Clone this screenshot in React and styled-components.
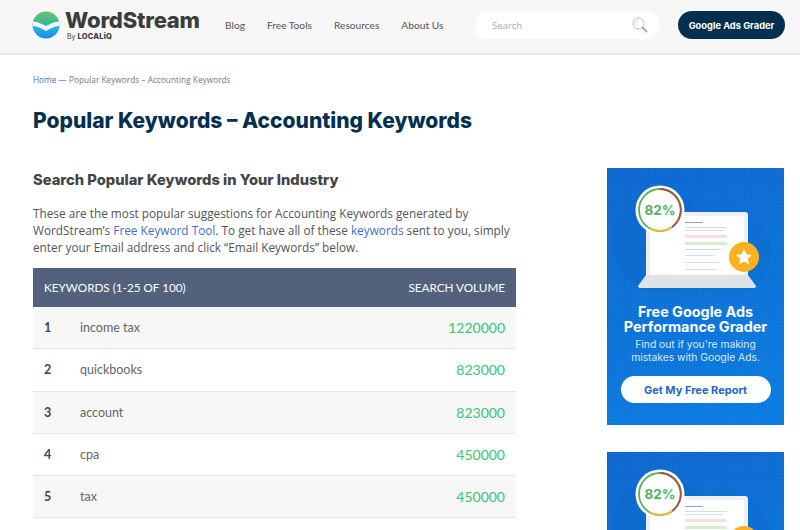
import React from 'react';
import styled, { createGlobalStyle } from 'styled-components';

const GlobalStyle = createGlobalStyle`
  html, body { margin: 0; padding: 0; background: #fff; overflow: hidden; }
  body { font-family: "Open Sans", sans-serif; color: #555; }
  * { box-sizing: border-box; }
`;

const rows = [
  ['1', 'income tax', '1220000'],
  ['2', 'quickbooks', '823000'],
  ['3', 'account', '823000'],
  ['4', 'cpa', '450000'],
  ['5', 'tax', '450000'],
];

const Page = styled.div`
  width: 800px;
  height: 530px;
  overflow: hidden;
`;

const Header = styled.header`
  height: 55px;
  background: #f7f7f7;
  border-bottom: 2px solid #e8e8e8;
  display: flex;
  align-items: center;
  padding: 0 15px 3px 32px;
`;

const Logo = styled.div`
  display: flex;
  align-items: center;
  gap: 5px;
  width: 191px;
`;

const LogoText = styled.div`
  display: flex;
  flex-direction: column;
  color: #3c3c3c;
  font-family: Inter, sans-serif;
`;

const LogoName = styled.span`
  font-size: 22px;
  font-weight: 800;
  line-height: 23px;
  letter-spacing: -0.2px;
`;

const LogoBy = styled.span`
  font-size: 7px;
  line-height: 9px;
  padding-left: 2px;
  b { font-size: 7.5px; font-weight: 800; letter-spacing: 0.2px; }
`;

const Nav = styled.nav`
  display: flex;
  gap: 22px;
  margin-left: 2px;
  width: 250px;
  flex: none;
`;

const NavLink = styled.a`
  font-family: Lato, sans-serif;
  font-size: 10.2px;
  color: #555;
  white-space: nowrap;
`;

const Search = styled.div`
  width: 185px;
  height: 28px;
  background: #fff;
  border-radius: 14px;
  display: flex;
  align-items: center;
  justify-content: space-between;
  padding: 0 12px 0 17px;
  font-size: 9.5px;
  color: #aaa;
`;

const GraderButton = styled.a`
  margin-left: 18px;
  width: 107px;
  height: 28px;
  border-radius: 14px;
  background: #03304f;
  color: #fff;
  display: flex;
  align-items: center;
  justify-content: center;
  font-family: Inter, sans-serif;
  font-size: 9.3px;
  font-weight: 700;
`;

const Main = styled.main`
  padding: 0 16px 0 33px;
`;

const Crumbs = styled.div`
  padding-top: 19px;
  font-size: 8.3px;
  line-height: 12px;
  color: #777;
`;

const BlueLink = styled.a`
  color: #3f6fc9;
`;

const Title = styled.h1`
  margin: 22px 0 0;
  font-family: Inter, sans-serif;
  font-size: 21px;
  line-height: 26px;
  font-weight: 800;
  color: #03304f;
`;

const Columns = styled.div`
  display: grid;
  grid-template-columns: 483px 177px;
  column-gap: 91px;
`;

const Content = styled.section`
  padding-top: 36px;
`;

const Subtitle = styled.h2`
  margin: 0;
  font-family: Inter, sans-serif;
  font-size: 14.7px;
  line-height: 20px;
  font-weight: 800;
  color: #444;
`;

const Intro = styled.p`
  margin: 15px 0 0;
  font-size: 11.8px;
  line-height: 17px;
  color: #555;
`;

const Table = styled.div`
  margin-top: 12px;
`;

const TableHead = styled.div`
  height: 39px;
  background: #53627c;
  color: #fff;
  display: flex;
  justify-content: space-between;
  align-items: center;
  padding: 0 11px 2px;
  font-family: Lato, sans-serif;
  font-size: 11.7px;
`;

const Row = styled.div`
  height: 42.3px;
  display: flex;
  align-items: center;
  padding: 0 11px;
  background: ${p => (p.$odd ? '#f7f7f7' : '#fff')};
  border-bottom: 1px solid #e6e6e6;
  font-family: Lato, sans-serif;
`;

const RowNum = styled.span`
  width: 36px;
  font-size: 12.5px;
  font-weight: 700;
  color: #444;
`;

const RowWord = styled.span`
  font-size: 12.5px;
  color: #666;
`;

const RowVolume = styled.span`
  margin-left: auto;
  font-size: 14px;
  color: #3cc473;
`;

const Sidebar = styled.aside`
  padding-top: 34px;
  display: flex;
  flex-direction: column;
  gap: 27px;
`;

const Banner = styled.div`
  width: 177px;
  height: 257px;
  flex: none;
  background:
    radial-gradient(rgba(255, 255, 255, 0.07) 0.6px, transparent 0.8px) 0 0 / 3px 3px,
    linear-gradient(160deg, #0f68cf, #0a7de2);
  display: flex;
  flex-direction: column;
  align-items: center;
  color: #fff;
  font-family: Inter, sans-serif;
`;

const BannerArt = styled.svg`
  width: 177px;
  height: 136px;
  flex: none;
  display: block;
`;

const BannerTitle = styled.div`
  font-size: 14.4px;
  line-height: 15px;
  font-weight: 700;
  text-align: center;
  white-space: nowrap;
`;

const BannerText = styled.div`
  margin-top: 4px;
  font-size: 10.3px;
  line-height: 13px;
  text-align: center;
  color: #dbe9fa;
  white-space: nowrap;
`;

const BannerButton = styled.div`
  margin-top: 12px;
  width: 150px;
  height: 27px;
  border-radius: 14px;
  background: #fff;
  color: #2467c8;
  display: flex;
  align-items: center;
  justify-content: center;
  font-size: 11px;
  font-weight: 700;
`;

const MagnifierIcon = () => (
  <svg width="16" height="16" viewBox="0 0 16 16" fill="none">
    <circle cx="6.5" cy="6.5" r="5.5" stroke="#bdbdbd" strokeWidth="1" />
    <path d="M3.5 6a3 3 0 0 1 2.5-2.6" stroke="#d8d8d8" strokeWidth="1" />
    <path d="M10.6 10.6 L14.5 14.5" stroke="#a9a9a9" strokeWidth="2" strokeLinecap="round" />
  </svg>
);

const LogoMark = () => (
  <svg width="28" height="28" viewBox="0 0 28 28">
    <defs>
      <linearGradient id="logoTop" x1="0" y1="0" x2="0" y2="1">
        <stop offset="0" stopColor="#6cc16a" />
        <stop offset="1" stopColor="#34b79c" />
      </linearGradient>
      <linearGradient id="logoBottom" x1="0" y1="0" x2="0" y2="1">
        <stop offset="0" stopColor="#25c0e6" />
        <stop offset="1" stopColor="#1a86ee" />
      </linearGradient>
      <clipPath id="logoClip"><circle cx="14" cy="14" r="13.5" /></clipPath>
    </defs>
    <g clipPath="url(#logoClip)">
      <rect width="28" height="14" fill="url(#logoTop)" />
      <rect y="13" width="28" height="15" fill="url(#logoBottom)" />
      <path d="M0 10.5 C5 10 9 12.5 14 15 C19 12.5 23 10 28 10.5 L28 15 C23 15 19 17 14 20 C9 17 5 15 0 15 Z" fill="#f7f7f7" />
    </g>
  </svg>
);

const BannerDrawing = () => (
  <BannerArt viewBox="0 0 177 136">
    <circle cx="55" cy="75" r="50" fill="#0c62c4" opacity="0.3" />
    <circle cx="120" cy="85" r="44" fill="#0c62c4" opacity="0.2" />
    <rect x="39" y="44" width="102" height="66" rx="3" fill="#eef0f3" />
    <rect x="43" y="48" width="94" height="60" fill="#fff" />
    <path d="M31 118 L39 107 L141 107 L149 118 Q149 120 146 120 L34 120 Q31 120 31 118 Z" fill="#dfe3e8" />
    <rect x="78" y="54" width="18" height="1" fill="#9aa2ad" />
    <rect x="78" y="59" width="42" height="0.7" fill="#c9ced5" />
    <rect x="78" y="62" width="38" height="0.7" fill="#c9ced5" />
    <rect x="78" y="67" width="42" height="3" fill="#f9dfdb" />
    <rect x="78" y="74" width="42" height="3" fill="#d5edd0" />
    <rect x="78" y="81" width="36" height="0.7" fill="#b9bfc7" />
    <rect x="78" y="87" width="30" height="0.7" fill="#c9ced5" />
    <rect x="78" y="94" width="34" height="0.7" fill="#c9ced5" />
    <rect x="78" y="101" width="32" height="0.7" fill="#c9ced5" />
    <circle cx="53" cy="42" r="24.5" fill="#fff" />
    <circle cx="53" cy="42" r="21" fill="none" stroke="#52b365" strokeWidth="1.8" />
    <path d="M53 21 A21 21 0 0 1 65 59" fill="none" stroke="#a5553a" strokeWidth="1.8" />
    <path d="M65 59 A21 21 0 0 1 43 60.5" fill="none" stroke="#f5b82e" strokeWidth="1.8" />
    <text x="53" y="47" textAnchor="middle" fontFamily="Inter, sans-serif" fontWeight="700" fontSize="13.5" fill="#52b365">82%</text>
    <circle cx="137" cy="89" r="15" fill="#fbb022" />
    <path d="M137 81 L139.4 86.3 L145 87 L140.8 90.8 L142 96.5 L137 93.6 L132 96.5 L133.2 90.8 L129 87 L134.6 86.3 Z" fill="#fff" />
  </BannerArt>
);

// the second banner runs off the bottom of the window, only its drawing shows
const AdBanner = ({ cropped }) => (
  <Banner>
    <BannerDrawing />
    {!cropped && (
      <>
        <BannerTitle>Free Google Ads<br />Performance Grader</BannerTitle>
        <BannerText>Find out if you're making<br />mistakes with Google Ads.</BannerText>
        <BannerButton>Get My Free Report</BannerButton>
      </>
    )}
  </Banner>
);

const App = () => (
  <Page>
    <GlobalStyle />
    <Header>
      <Logo>
        <LogoMark />
        <LogoText>
          <LogoName>WordStream</LogoName>
          <LogoBy>By <b>LOCALiQ</b></LogoBy>
        </LogoText>
      </Logo>
      <Nav>
        <NavLink>Blog</NavLink>
        <NavLink>Free Tools</NavLink>
        <NavLink>Resources</NavLink>
        <NavLink>About Us</NavLink>
      </Nav>
      <Search>
        Search
        <MagnifierIcon />
      </Search>
      <GraderButton>Google Ads Grader</GraderButton>
    </Header>
    <Main>
      <Crumbs><BlueLink>Home</BlueLink> — Popular Keywords – Accounting Keywords</Crumbs>
      <Title>Popular Keywords – Accounting Keywords</Title>
      <Columns>
        <Content>
          <Subtitle>Search Popular Keywords in Your Industry</Subtitle>
          <Intro>
            These are the most popular suggestions for Accounting Keywords generated by WordStream’s{' '}
            <BlueLink>Free Keyword Tool</BlueLink>. To get have all of these <BlueLink>keywords</BlueLink> sent to you, simply
            enter your Email address and click “Email Keywords” below.
          </Intro>
          <Table>
            <TableHead>
              <span>KEYWORDS (1-25 OF 100)</span>
              <span>SEARCH VOLUME</span>
            </TableHead>
            {rows.map((r, i) => (
              <Row key={r[0]} $odd={i % 2 === 0}>
                <RowNum>{r[0]}</RowNum>
                <RowWord>{r[1]}</RowWord>
                <RowVolume>{r[2]}</RowVolume>
              </Row>
            ))}
          </Table>
        </Content>
        <Sidebar>
          <AdBanner />
          <AdBanner cropped />
        </Sidebar>
      </Columns>
    </Main>
  </Page>
);

export default App;
